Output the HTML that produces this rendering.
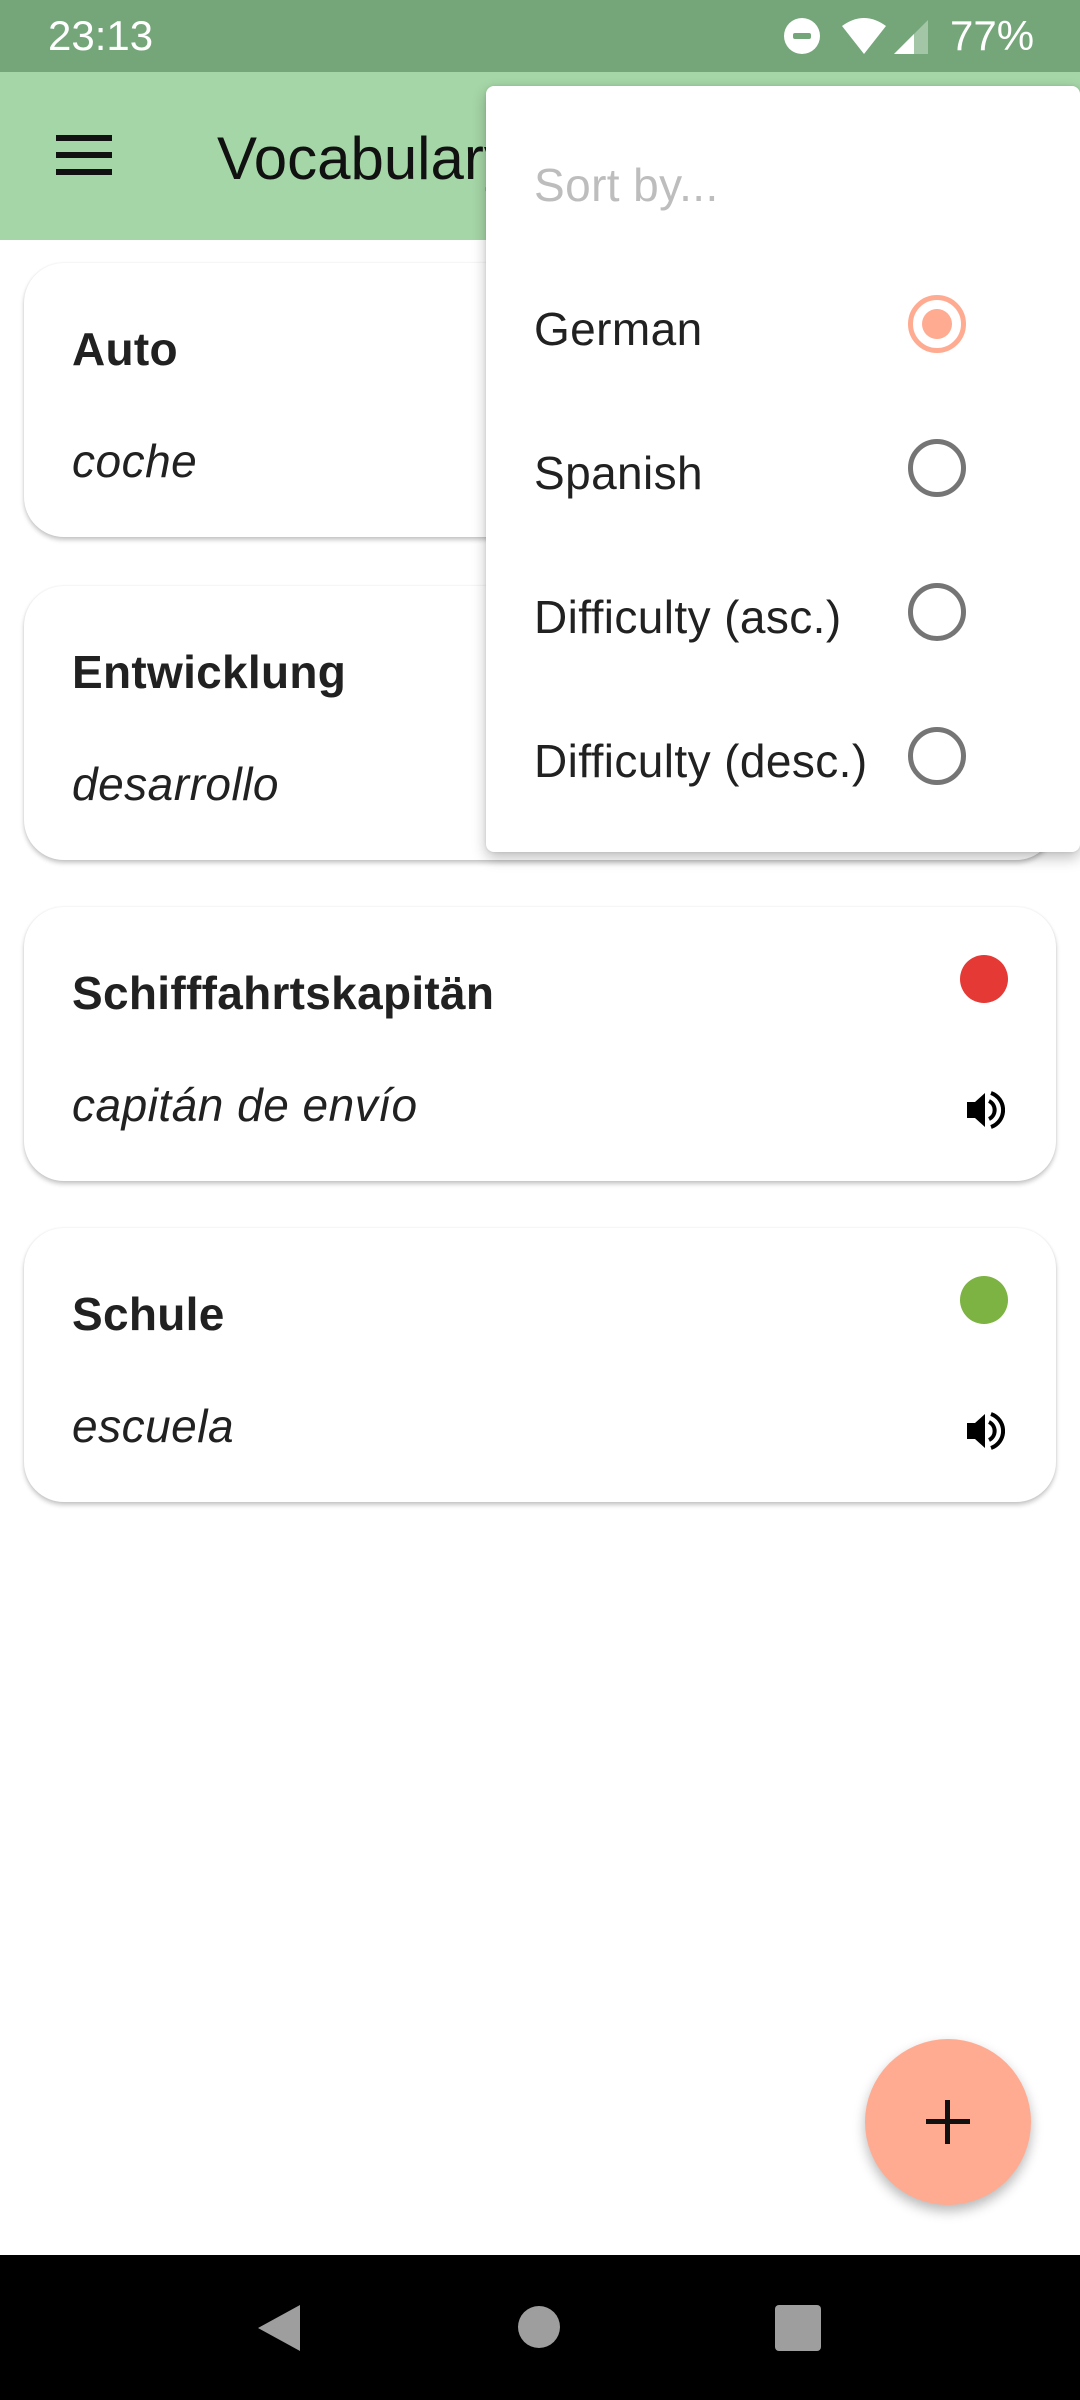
<!DOCTYPE html>
<html><head><meta charset="utf-8"><style>
*{margin:0;padding:0;box-sizing:border-box}
body{width:1080px;height:2400px;position:relative;background:#fff;font-family:"Liberation Sans",sans-serif;overflow:hidden;color:#212121}
.abs{position:absolute}
.status{left:0;top:0;width:1080px;height:72px;background:#75a67a;color:#fff}
.appbar{left:0;top:72px;width:1080px;height:168px;background:#a5d6a7}
.card{left:24px;width:1032px;height:274px;background:#fff;border-radius:40px;box-shadow:0 3px 5px rgba(0,0,0,.22),0 0 2px rgba(0,0,0,.08)}
.t{position:absolute;left:48px;top:59px;font-size:46px;font-weight:bold;letter-spacing:0.3px;color:#212121}
.s{position:absolute;left:48px;top:171px;font-size:46px;font-style:italic;letter-spacing:0.5px;color:#212121}
.dot{position:absolute;left:936px;top:48px;width:48px;height:48px;border-radius:50%}
.spk{position:absolute;left:941px;top:183px}
.menu{left:486px;top:86px;width:594px;height:766px;background:#fff;border-radius:8px;box-shadow:0 6px 14px rgba(0,0,0,.25),0 0 3px rgba(0,0,0,.1)}
.mi{position:absolute;left:48px;font-size:46px;letter-spacing:0.4px;color:#212121}
.rad{position:absolute;left:422px;width:58px;height:58px;border-radius:50%;border:5px solid #757575}
</style></head><body>
<div class="abs status">
 <div class="abs" style="left:48px;top:12px;font-size:42px">23:13</div>
 <svg class="abs" style="left:782px;top:16px" width="40" height="40"><circle cx="20" cy="20" r="18" fill="#fff"/><rect x="11" y="17" width="18" height="6" rx="2" fill="#75a67a"/></svg>
 <svg class="abs" style="left:840px;top:16px" width="50" height="40"><path d="M2 10 Q24 -6 46 10 L24 38 Z" fill="#fff"/></svg>
 <svg class="abs" style="left:892px;top:18px" width="40" height="38"><path d="M36 2 L36 36 L2 36 Z" fill="#a3c6a6"/><path d="M22 16 L22 36 L2 36 Z" fill="#fff"/></svg>
 <div class="abs" style="left:950px;top:12px;font-size:42px">77%</div>
</div>
<div class="abs appbar">
 <div class="abs" style="left:56px;top:63px;width:56px;height:6px;background:#111"></div>
 <div class="abs" style="left:56px;top:80px;width:56px;height:6px;background:#111"></div>
 <div class="abs" style="left:56px;top:97px;width:56px;height:6px;background:#111"></div>
 <div class="abs" style="left:217px;top:52px;font-size:60px;color:#111">Vocabulary</div>
</div>

<div class="abs card" style="top:263px"><div class="t">Auto</div><div class="s">coche</div></div>
<div class="abs card" style="top:586px"><div class="t">Entwicklung</div><div class="s">desarrollo</div></div>
<div class="abs card" style="top:907px"><div class="t">Schifffahrtskapitän</div><div class="s">capitán de envío</div>
 <div class="dot" style="background:#e53935"></div>
 <svg class="spk" width="40" height="40" viewBox="0 0 40 40"><path d="M2 12 H10 L20 3 V37 L10 28 H2 Z" fill="#000"/><path d="M24 11 A10 10 0 0 1 24 29" stroke="#000" stroke-width="4" fill="none"/><path d="M26 3 A18 18 0 0 1 26 37" stroke="#000" stroke-width="4" fill="none"/></svg>
</div>
<div class="abs card" style="top:1228px"><div class="t">Schule</div><div class="s">escuela</div>
 <div class="dot" style="background:#7cb342"></div>
 <svg class="spk" width="40" height="40" viewBox="0 0 40 40"><path d="M2 12 H10 L20 3 V37 L10 28 H2 Z" fill="#000"/><path d="M24 11 A10 10 0 0 1 24 29" stroke="#000" stroke-width="4" fill="none"/><path d="M26 3 A18 18 0 0 1 26 37" stroke="#000" stroke-width="4" fill="none"/></svg>
</div>

<div class="abs menu">
 <div class="mi" style="top:72px;color:#bdbdbd">Sort by...</div>
 <div class="mi" style="top:216px">German</div>
 <div class="mi" style="top:360px">Spanish</div>
 <div class="mi" style="top:504px">Difficulty (asc.)</div>
 <div class="mi" style="top:648px">Difficulty (desc.)</div>
 <div class="rad" style="top:209px;border-color:#ffab91"><div style="position:absolute;left:9px;top:9px;width:30px;height:30px;border-radius:50%;background:#ffab91"></div></div>
 <div class="rad" style="top:353px"></div>
 <div class="rad" style="top:497px"></div>
 <div class="rad" style="top:641px"></div>
</div>

<div class="abs" style="left:865px;top:2039px;width:166px;height:166px;border-radius:50%;background:#ffab91;box-shadow:0 6px 12px rgba(0,0,0,.28)">
 <div class="abs" style="left:61px;top:80px;width:44px;height:5px;background:#111"></div>
 <div class="abs" style="left:80px;top:61px;width:5px;height:44px;background:#111"></div>
</div>

<div class="abs" style="left:0;top:2255px;width:1080px;height:145px;background:#000">
 <svg class="abs" style="left:256px;top:48px" width="46" height="50"><path d="M44 2 V48 L2 25 Z" fill="#9e9e9e"/></svg>
 <div class="abs" style="left:518px;top:51px;width:42px;height:42px;border-radius:50%;background:#9e9e9e"></div>
 <div class="abs" style="left:775px;top:50px;width:46px;height:46px;border-radius:4px;background:#9e9e9e"></div>
</div>
</body></html>
